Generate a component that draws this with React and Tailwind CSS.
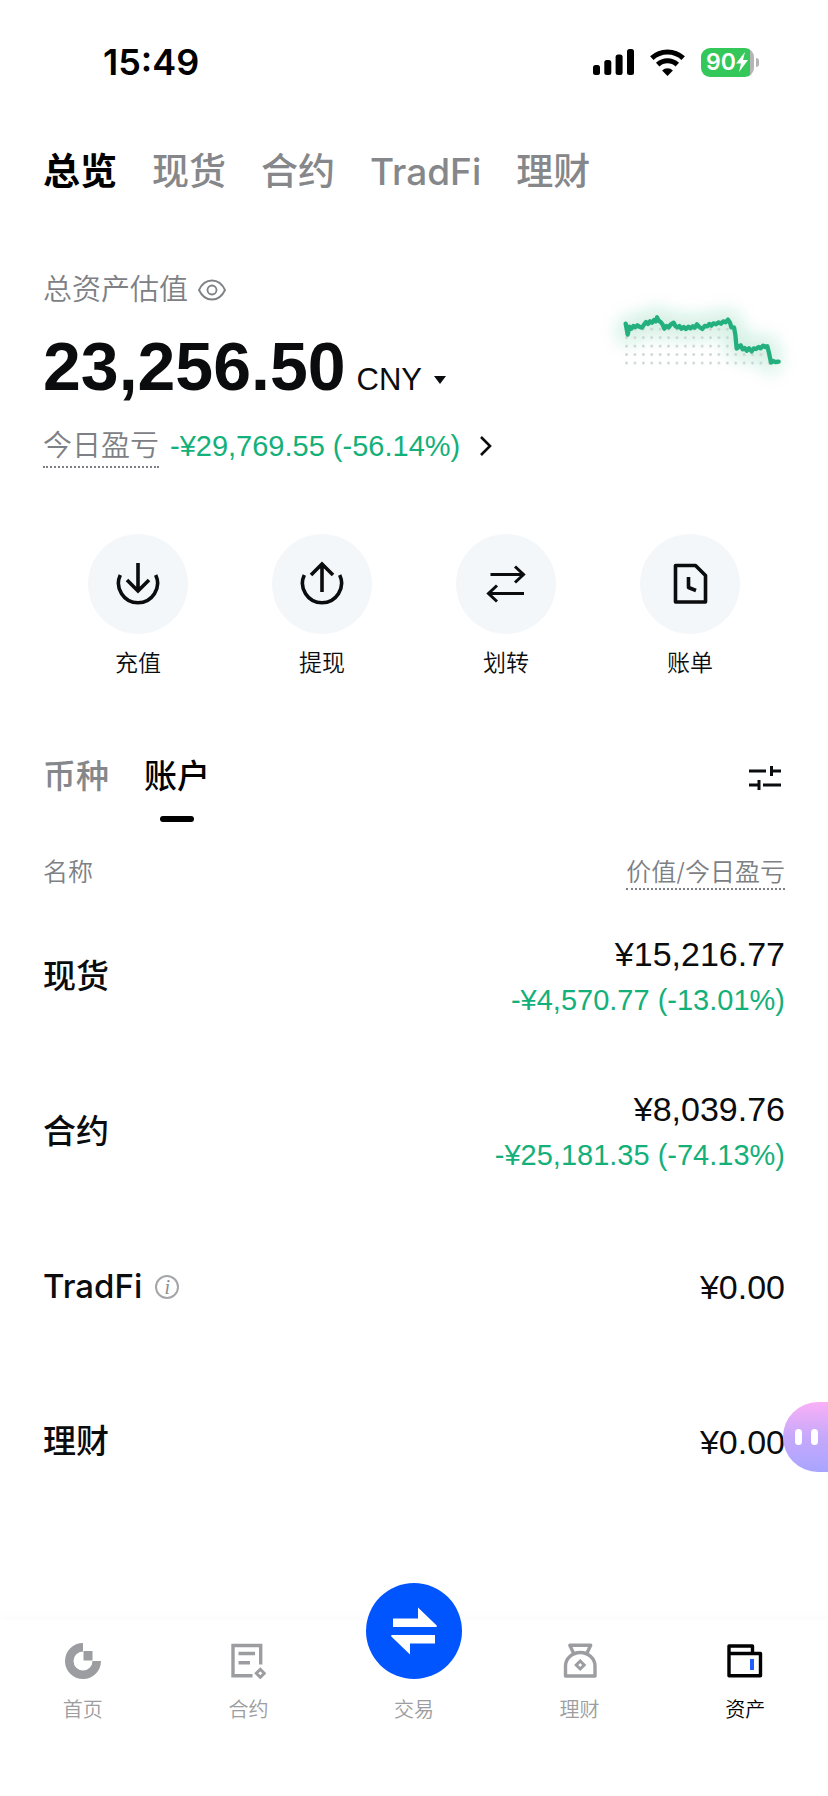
import { useState } from 'react'

const topTabs = ['总览', '现货', '合约', 'TradFi', '理财']

const accounts = [
  { name: '现货', value: '¥15,216.77', change: '-¥4,570.77 (-13.01%)' },
  { name: '合约', value: '¥8,039.76', change: '-¥25,181.35 (-74.13%)' },
  { name: 'TradFi', value: '¥0.00', info: true },
  { name: '理财', value: '¥0.00' },
]

const trend =
  '107,127 113,160 118,136 124,142 130,134 136,137 142,132 148,136 156,139 162,130 168,122 174,128 180,120 186,124 192,116 197,120 201,108 206,118 212,122 218,130 223,142 230,134 236,138 242,130 251,124 256,134 262,138 268,134 274,142 281,137 288,143 295,136 301,141 308,135 314,139 321,129 328,137 337,143 344,134 352,135 358,128 364,133 370,126 378,129 386,123 393,127 400,120 407,123 414,115 420,124 424,138 432,138 436,160 440,202 446,197 452,192 458,204 464,200 470,208 477,201 485,210 491,201 498,203 506,197 512,201 519,193 526,197 532,195 537,215 543,244 549,239 556,242 566,241'

function StatusBar() {
  return (
    <div className="flex h-[124px] items-center justify-between pr-[69px] pl-[103px] text-black">
      <span className="text-4xl font-semibold">15:49</span>
      <div className="flex items-center gap-4">
        <svg className="h-[26px] w-[41px]" viewBox="0 0 41 26" fill="currentColor">
          <rect x="0" y="16" width="7" height="10" rx="2.5" />
          <rect x="11.3" y="11" width="7" height="15" rx="2.5" />
          <rect x="22.6" y="5.5" width="7" height="20.5" rx="2.5" />
          <rect x="34" y="0" width="7" height="26" rx="2.5" />
        </svg>
        <svg className="h-[27px] w-[35px]" viewBox="0 0 35 27" fill="none" stroke="currentColor">
          <path d="M1.8 9.2a23 23 0 0 1 31.4 0" strokeWidth="5" />
          <path d="M7.7 15.6a14.3 14.3 0 0 1 19.6 0" strokeWidth="5" />
          <path d="M17.5 27l-5.4-5.6a7.8 7.8 0 0 1 10.8 0z" fill="currentColor" stroke="none" />
        </svg>
        <div className="flex items-center gap-[2px]">
          <div className="flex h-[29px] w-[53px] items-center rounded-[9px] bg-linear-to-r from-[#34c759] from-92% to-[#b5b5b8] to-92% pl-[5px] text-white">
            <span className="text-[23px] font-semibold">90</span>
            <svg className="h-5 w-3" viewBox="0 0 12 20" fill="currentColor">
              <path d="M9 0L0 11.5h5L3 20l9-12H7z" />
            </svg>
          </div>
          <span className="h-[9px] w-[3px] rounded-r-full bg-[#b5b5b8]" />
        </div>
      </div>
    </div>
  )
}

function TrendChart() {
  return (
    <svg className="mt-[42px] h-[60px] w-40 overflow-visible" viewBox="105 92 480 180" fill="none">
      <defs>
        <filter id="glow" x="-50%" y="-100%" width="200%" height="300%">
          <feGaussianBlur stdDeviation="26" />
        </filter>
        <pattern id="dots" x="97" y="131" width="25.2" height="25.4" patternUnits="userSpaceOnUse">
          <circle cx="12.6" cy="12.7" r="4" fill="#c9d2cf" />
        </pattern>
      </defs>
      <polyline points={trend} stroke="#22b07d" strokeOpacity="0.22" strokeWidth="56" strokeLinejoin="round" filter="url(#glow)" />
      <polygon points={`${trend} 566,252 97,252 97,125`} fill="url(#dots)" />
      <polyline points={trend} stroke="#24b07e" strokeWidth="13" strokeLinejoin="round" strokeLinecap="round" />
    </svg>
  )
}

function Action({ label, children }) {
  return (
    <button type="button" className="flex flex-col items-center">
      <span className="grid size-[100px] place-items-center rounded-full bg-[#f4f7f9]">
        <svg className="size-12" viewBox="-24 -24 48 48" fill="none" stroke="currentColor" strokeWidth="3.6">
          {children}
        </svg>
      </span>
      <span className="mt-[15px] text-[23px] leading-7 font-[350]">{label}</span>
    </button>
  )
}

function NavItem({ label, active, children }) {
  return (
    <a href="#" className={active ? 'flex flex-col items-center text-black' : 'flex flex-col items-center text-[#9c9da0]'}>
      <svg className="size-9" viewBox="0 0 36 36" fill="none" stroke="currentColor" strokeWidth="3.4">
        {children}
      </svg>
      <span className="mt-[17px] text-[20px] leading-7 font-[350]">{label}</span>
    </a>
  )
}

export default function App() {
  const [topTab, setTopTab] = useState('总览')
  const [listTab, setListTab] = useState('账户')

  return (
    <div className="relative flex min-h-screen flex-col bg-white font-['Inter','Noto_Sans_CJK_SC',sans-serif] text-[#0b0c0e]">
      <StatusBar />

      <nav className="mt-[22px] flex h-[52px] items-center gap-[35px] px-[43px]">
        {topTabs.map((tab) => (
          <button
            key={tab}
            type="button"
            onClick={() => setTopTab(tab)}
            className={topTab === tab ? 'text-[37px] leading-[52px] font-semibold text-black' : 'text-[37px] leading-[52px] font-medium text-[#85878a]'}
          >
            {tab}
          </button>
        ))}
      </nav>

      <section className="mt-[72px] flex justify-between px-[43px]">
        <div>
          <div className="flex h-10 items-center gap-[10px] text-[29px] font-[350] text-[#7d8084]">
            总资产估值
            <button type="button" aria-label="隐藏金额">
              <svg className="h-[22px] w-7" viewBox="0 0 28 22" fill="none" stroke="currentColor" strokeWidth="1.8">
                <path d="M1 11C4 4.5 8.500 1.500 14 1.500S24 4.500 27 11C24 17.500 19.500 20.500 14 20.500S4 17.500 1 11z" />
                <circle cx="14" cy="11" r="4.500" />
              </svg>
            </button>
          </div>
          <div className="mt-4 flex h-20 items-baseline gap-[11px] font-['Liberation_Sans',sans-serif]">
            <span className="text-[68px] leading-20 font-bold">23,256.50</span>
            <button type="button" className="flex items-center gap-3 text-[31px]">
              CNY
              <svg className="h-2 w-3" viewBox="0 0 12 8" fill="currentColor">
                <path d="M0 0h12L6 8z" />
              </svg>
            </button>
          </div>
          <div className="mt-5 flex items-start gap-[11px] text-[29px] leading-10">
            <span className="border-b-2 border-dotted border-[#7d8084] font-[350] text-[#7d8084]">今日盈亏</span>
            <a href="#" className="flex items-center gap-5">
              <span className="font-['Liberation_Sans',sans-serif] text-[#14b07a]">-¥29,769.55 (-56.14%)</span>
              <svg className="h-5 w-3" viewBox="0 0 12 20" fill="none" stroke="currentColor" strokeWidth="2.6">
                <path d="M1 1l9 9-9 9" />
              </svg>
            </a>
          </div>
        </div>
        <TrendChart />
      </section>

      <section className="mt-[66px] grid grid-cols-4 px-[46px]">
        <Action label="充值">
          <path d="M-17.700-9A19.500 19.500 0 1 0 17.700-9M0-21V6M-11-4L0 7L11-4" />
        </Action>
        <Action label="提现">
          <path d="M-17.700-9A19.500 19.500 0 1 0 17.700-9M0 8V-19M-11-9L0-20L11-9" />
        </Action>
        <Action label="划转">
          <path d="M-15.500-9.500H17M9-17.500L17.500-9.500L9-1.500M18 9.500H-17M-9 1.500L-17.500 9.500L-9 17.500" strokeWidth="3" />
        </Action>
        <Action label="账单">
          <path d="M-14.500-18.500H5.500L15.500-8.500V18H-14.500ZM-1.500-7V3.500L6 6.500" strokeLinejoin="round" />
        </Action>
      </section>

      <div className="mt-[75px] flex items-start justify-between px-[43px]">
        <div className="flex gap-[35px]">
          {['币种', '账户'].map((tab) => (
            <button
              key={tab}
              type="button"
              onClick={() => setListTab(tab)}
              className="flex flex-col items-center text-[33px] leading-12 font-medium"
            >
              <span className={listTab === tab ? 'text-black' : 'text-[#85878a]'}>{tab}</span>
              <span className={listTab === tab ? 'mt-4 h-[6px] w-[34px] rounded-full bg-black' : 'mt-4 h-[6px] w-[34px]'} />
            </button>
          ))}
        </div>
        <button type="button" aria-label="筛选" className="mt-[14px] mr-1">
          <svg className="h-6 w-8" viewBox="0 0 32 24" fill="none" stroke="currentColor" strokeWidth="3">
            <path d="M0 5H17M22.500 0V10M22.500 5H32M0 19H10M10 14V24M14 19H32" />
          </svg>
        </button>
      </div>

      <div className="mt-[34px] px-[43px]">
        <table className="w-full">
          <thead>
            <tr className="h-[43px] align-top text-[25px] leading-8 text-[#7d8084]">
              <th className="text-left font-[350]">名称</th>
              <th className="text-right font-[350]">
                <span className="inline-block border-b-2 border-dotted border-[#7d8084]">价值/今日盈亏</span>
              </th>
            </tr>
          </thead>
          <tbody>
            {accounts.map((account) => (
              <tr key={account.name} className="h-[155px]">
                <td className="text-[33px] font-medium">
                  <div className="flex items-center gap-[13px]">
                    {account.name}
                    {account.info ? (
                      <button type="button" aria-label="说明" className="grid size-6 place-items-center rounded-full border-2 border-[#a4a6a9] font-['Liberation_Serif',serif] text-xl leading-5 font-normal text-[#8b8d90] italic">
                        i
                      </button>
                    ) : null}
                  </div>
                </td>
                <td className="text-right font-['Liberation_Sans',sans-serif] leading-[46px]">
                  <div className="text-[34px]">{account.value}</div>
                  {account.change ? <div className="text-[29px] text-[#14b07a]">{account.change}</div> : null}
                </td>
              </tr>
            ))}
          </tbody>
        </table>
      </div>

      {/* assistant tab that peeks in from the right edge */}
      <button
        type="button"
        aria-label="助手"
        className="absolute right-0 bottom-[324px] flex h-[70px] w-[45px] items-center gap-[9px] rounded-l-full bg-linear-to-b from-[#f9b0f6] via-[#c6a8fb] to-[#a8a5ff] pl-3"
      >
        <span className="h-4 w-[7px] rounded-full bg-white" />
        <span className="h-4 w-[7px] rounded-full bg-white" />
      </button>

      <nav className="mt-auto grid h-[176px] grid-cols-5 bg-white pt-[23px] shadow-[0_-4px_12px_rgba(0,0,0,0.02)]">
        <NavItem label="首页">
          <path d="M18 0A18 18 0 1 0 36 18H27.500A9.500 9.500 0 1 1 18 8.500Z" fill="currentColor" stroke="none" />
          <path d="M18.500 8H27.500V17.500H18.500Z" fill="currentColor" stroke="none" />
        </NavItem>
        <NavItem label="合约">
          <path d="M22.500 32.800H3V2.500H30.700V21.600M8.500 10.500H25M8.500 19.700H20" />
          <path d="M30.300 26.300L34.300 30.300L30.300 34.300L26.300 30.300Z" strokeWidth="3" />
        </NavItem>
        <a href="#" className="flex flex-col items-center text-[#9c9da0]">
          <span className="-mt-[60px] grid size-24 place-items-center rounded-full bg-[#0055ff]">
            <svg className="size-12" viewBox="0 0 48 48" fill="#fff">
              <path d="M3 11.500H28V0.500L46.700 18.500V20H3ZM45 36.500H20V47.500L1.300 29.500V28H45Z" />
            </svg>
          </span>
          <span className="mt-[17px] text-[20px] leading-7 font-[350]">交易</span>
        </a>
        <NavItem label="理财">
          <path d="M3.500 33V23A14.700 13.500 0 0 1 33 23V33Z" strokeLinejoin="round" />
          <path d="M11.500 10L7.800 2.300H28.700L25 10" strokeLinejoin="round" />
          <path d="M18.200 18L22.200 22L18.200 26L14.200 22Z" strokeWidth="3" />
        </NavItem>
        <NavItem label="资产" active>
          <path d="M2 10.500V3H25.500V10.500M2 10.500H33.500V32.700H2Z" strokeLinejoin="round" />
          <path d="M23 16H27V27H23Z" fill="#1f5eff" stroke="none" />
        </NavItem>
      </nav>
    </div>
  )
}
